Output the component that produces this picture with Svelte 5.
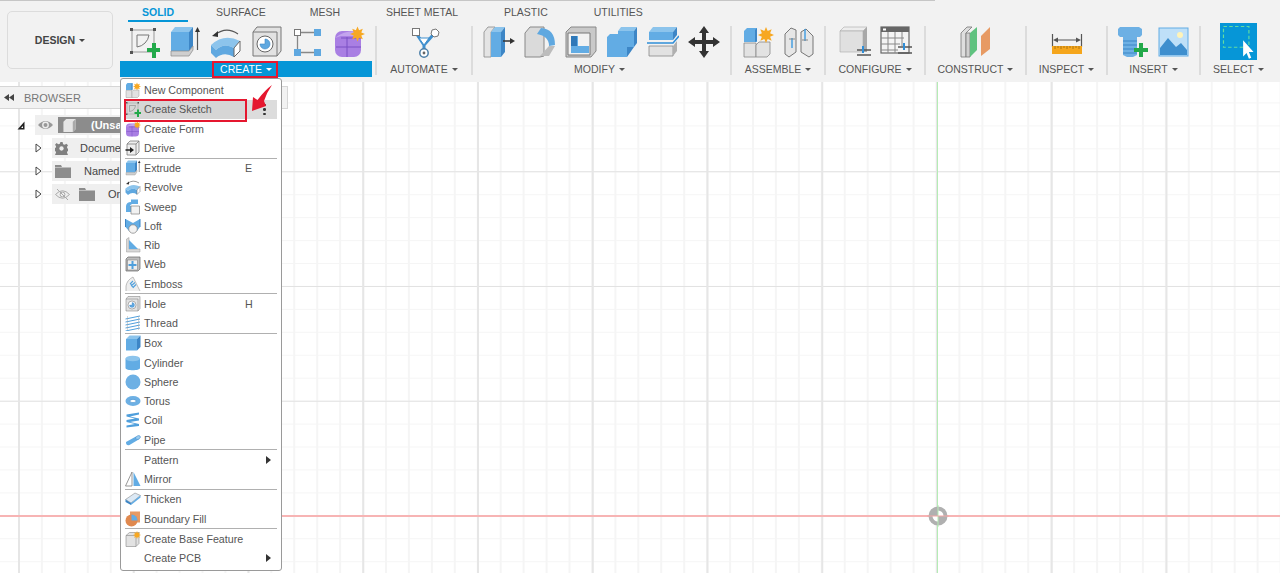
<script>
	// toolbar content
	const tabs = ['SOLID', 'SURFACE', 'MESH', 'SHEET METAL', 'PLASTIC', 'UTILITIES'];

	const groups = [
		{ label: 'CREATE', width: 252, icons: ['sketch', 'extrude', 'revolve', 'hole', 'nodes', 'form'] },
		{ label: 'AUTOMATE', width: 94, icons: ['automate'] },
		{ label: 'MODIFY', width: 257, icons: ['press', 'fillet', 'shell', 'combine', 'split', 'move'] },
		{ label: 'ASSEMBLE', width: 92, icons: ['newcomp', 'joint'] },
		{ label: 'CONFIGURE', width: 98, icons: ['param', 'table'] },
		{ label: 'CONSTRUCT', width: 99, icons: ['plane'] },
		{ label: 'INSPECT', width: 79, icons: ['measure'] },
		{ label: 'INSERT', width: 91, icons: ['bolt', 'image'] },
		{ label: 'SELECT', width: 75, icons: ['select'] }
	];

	const menu = [
		{ name: 'New Component', icon: 'newcomp' },
		{ name: 'Create Sketch', icon: 'sketch', active: true },
		{ name: 'Create Form', icon: 'form' },
		{ name: 'Derive', icon: 'derive' },
		{ sep: true },
		{ name: 'Extrude', icon: 'extrude', key: 'E' },
		{ name: 'Revolve', icon: 'revolve' },
		{ name: 'Sweep', icon: 'sweep' },
		{ name: 'Loft', icon: 'loft' },
		{ name: 'Rib', icon: 'rib' },
		{ name: 'Web', icon: 'web' },
		{ name: 'Emboss', icon: 'emboss' },
		{ sep: true },
		{ name: 'Hole', icon: 'hole', key: 'H' },
		{ name: 'Thread', icon: 'thread' },
		{ sep: true },
		{ name: 'Box', icon: 'box' },
		{ name: 'Cylinder', icon: 'cylinder' },
		{ name: 'Sphere', icon: 'sphere' },
		{ name: 'Torus', icon: 'torus' },
		{ name: 'Coil', icon: 'coil' },
		{ name: 'Pipe', icon: 'pipe' },
		{ sep: true },
		{ name: 'Pattern', sub: true },
		{ name: 'Mirror', icon: 'mirror' },
		{ sep: true },
		{ name: 'Thicken', icon: 'thicken' },
		{ name: 'Boundary Fill', icon: 'boundary' },
		{ sep: true },
		{ name: 'Create Base Feature', icon: 'base' },
		{ name: 'Create PCB', sub: true }
	];

	function star(cx, cy, r) {
		let pts = [];
		for (let i = 0; i < 16; i++) {
			const rad = i % 2 ? r * 0.55 : r;
			const a = (i * Math.PI) / 8;
			pts.push((cx + rad * Math.sin(a)).toFixed(1) + ',' + (cy - rad * Math.cos(a)).toFixed(1));
		}
		return pts.join(' ');
	}
</script>

{#snippet icon(name, size = 32)}
	<svg class="ico" width={size} height={size} viewBox="0 0 32 32">
		{#if name === 'sketch'}
			<path d="M4 4H26V26H4Z" fill="none" stroke="#999" />
			<path d="M9 9H21V9A14 14 0 0 1 9 21Z" fill="none" stroke="#777" />
			<path d="M2 2h3v3H2zM25 2h3v3h-3zM2 25h3v3H2z" fill="#555" />
			<path d="M24 17h4v5h4v4h-4v6h-4v-6h-5v-4h5z" fill="#22a94a" />
		{:else if name === 'extrude'}
			<path d="M2 6L6 1H24L20 6Z" fill="#8cc4ec" />
			<path d="M2 6H20V25H2Z" fill="#62ace4" />
			<path d="M20 6L24 1V20L20 25Z" fill="#3d86c6" />
			<path d="M2 25H20L24 20V24L20 30H2Z" fill="#cfcfcf" stroke="#8a8a8a" stroke-width=".7" />
			<path d="M28.5 24V4" stroke="#555" stroke-width="1.2" />
			<path d="M26 6L28.5 1L31 6Z" fill="#333" />
		{:else if name === 'revolve'}
			<path d="M5 9Q16 0 28 8" fill="none" stroke="#555" stroke-width="1.2" />
			<path d="M2 10L8 5V11Z" fill="#333" />
			<path d="M1 19Q14 7 30 15L24 22Q14 16 6 24Z" fill="#8cc4ec" />
			<path d="M1 19L6 24Q14 16 24 22V31Q14 25 6 32L1 27Z" fill="#5fa8e0" />
			<path d="M24 22L30 15V25L24 31Z" fill="#fff" stroke="#666" />
		{:else if name === 'hole'}
			<path d="M2 6L6 1H30V25L26 30H2Z" fill="#e2e2e2" stroke="#777" />
			<path d="M2 6H26V30" fill="none" stroke="#777" />
			<circle cx="14" cy="18" r="8" fill="#fff" stroke="#666" />
			<path d="M14 13A5 5 0 1 1 9 18H14Z" fill="#5fa8e0" stroke="#3d86c6" stroke-width=".6" />
		{:else if name === 'nodes'}
			<path d="M9 6.5H23M5.5 10V23M9 26.5H23" stroke="#888" stroke-width="1.3" />
			<rect x="2.5" y="3.5" width="6" height="6" fill="#fff" stroke="#777" />
			<rect x="22" y="3" width="7" height="7" fill="#5fa8e0" />
			<rect x="2" y="23" width="7" height="7" fill="#5fa8e0" />
			<rect x="22" y="23" width="7" height="7" fill="#5fa8e0" />
		{:else if name === 'form'}
			<rect x="2" y="5" width="26" height="26" rx="7" fill="#a97fe3" />
			<path d="M2 12Q10 5 22 5L28 10H8Z" fill="#c3a4ee" />
			<path d="M3 21H28M14 11V31M8 12H28" stroke="#7b50c4" stroke-width="1" fill="none" />
			<polygon points={star(24.5, 8, 7.5)} fill="#f7a823" />
		{:else if name === 'automate'}
			<path d="M8 7L16 19L25 9M16 19V26" fill="none" stroke="#3f8fce" stroke-width="3" />
			<path d="M11 12L21 12L16 19Z" fill="#fff" stroke="#3f8fce" />
			<rect x="4.5" y="2.5" width="7" height="7" fill="#fff" stroke="#777" />
			<polygon points="24,4 28,3 31,6 30,10 26,11 23,8" fill="#fff" stroke="#777" />
			<circle cx="16" cy="27" r="4.2" fill="#fff" stroke="#4c7fa8" stroke-width="1.5" />
			<circle cx="16" cy="27" r="1.4" fill="#666" />
		{:else if name === 'press'}
			<path d="M1 6L5 1H12L8 6V31H1Z" fill="#e4e4e4" stroke="#888" stroke-width=".8" />
			<path d="M8 6L12 1H22L18 6Z" fill="#8cc4ec" />
			<path d="M8 6H18V31H8Z" fill="#62ace4" />
			<path d="M18 6L22 1V26L18 31Z" fill="#3d86c6" />
			<path d="M20 15H28" stroke="#333" stroke-width="1.5" />
			<path d="M27 12L32 15L27 18Z" fill="#333" />
		{:else if name === 'fillet'}
			<path d="M1 7L6 1H20V30L16 31H1Z" fill="#dadada" stroke="#888" />
			<path d="M17 2Q31 3 31 19L25 20Q25 10 13 8Z" fill="#5fa8e0" />
			<path d="M25 20H31L25 30H16Z" fill="#bcbcbc" />
		{:else if name === 'shell'}
			<path d="M1 6L6 1H31V25L26 31H1Z" fill="#c9c9c9" stroke="#888" />
			<path d="M3 7H25V29H3Z" fill="#f2f2f2" stroke="#777" />
			<path d="M6 10H13V20H24V27H6Z" fill="#62ace4" />
			<path d="M6 10H12V20H6Z" fill="#2f78b8" />
		{:else if name === 'combine'}
			<path d="M12 5L15 1H31L28 5Z" fill="#8cc4ec" />
			<path d="M12 5H28V21H21V31H1V11L4 8H12Z" fill="#62ace4" />
			<path d="M28 5L31 1V17L28 21ZM21 21H28L21 31Z" fill="#3d86c6" />
		{:else if name === 'split'}
			<path d="M2 6L6 1H30L26 6Z" fill="#8cc4ec" />
			<path d="M2 6H26V14H2Z" fill="#62ace4" />
			<path d="M26 6L30 1V9L26 14Z" fill="#3d86c6" />
			<path d="M0 17H26L32 10" fill="none" stroke="#2f8ed8" stroke-width="1.6" />
			<path d="M2 20H26V30H2Z" fill="#e2e2e2" stroke="#888" stroke-width=".8" />
			<path d="M26 20L30 15V25L26 30Z" fill="#b0b0b0" />
		{:else if name === 'move'}
			<path d="M16 0L21 7H18V14H25V11L32 16L25 21V18H18V25H21L16 32L11 25H14V18H7V21L0 16L7 11V14H14V7H11Z" fill="#333" />
		{:else if name === 'newcomp'}
			<path d="M2 5L5 2H15V16H2Z" fill="#62ace4" />
			<path d="M13 4L15 2V15L13 16Z" fill="#3d86c6" />
			<path d="M2 17H14V31H2Z" fill="#e2e2e2" stroke="#888" stroke-width=".8" />
			<path d="M14 19L17 16H28V28L25 31H14Z" fill="#e2e2e2" stroke="#888" stroke-width=".8" />
			<polygon points={star(24, 9, 8)} fill="#f7a823" />
		{:else if name === 'joint'}
			<path d="M2 8L8 2L13 4V26L6 31L2 28Z" fill="#e6e6e6" stroke="#777" />
			<path d="M18 6L23 3L30 10V28L26 31L18 26Z" fill="#e6e6e6" stroke="#777" />
			<path d="M9 12V22M22 3V15" stroke="#3d9be0" stroke-width="1.4" />
			<path d="M6 13H12M19 14H25" stroke="#888" />
		{:else if name === 'param'}
			<path d="M1 5L5 1H28L24 5Z" fill="#ededed" stroke="#aaa" stroke-width=".6" />
			<path d="M1 5H24V26H1Z" fill="#e0e0e0" stroke="#aaa" stroke-width=".6" />
			<path d="M24 5L28 1V26H24Z" fill="#a8a8a8" />
			<path d="M18 24H32M18 29H32" stroke="#555" stroke-width="1.4" />
			<path d="M24 20V27" stroke="#2f8ed8" stroke-width="2" />
		{:else if name === 'table'}
			<rect x="1" y="1" width="28" height="26" fill="#f4f4f4" stroke="#666" stroke-width="1.2" />
			<path d="M1 1H29V6H1Z" fill="#666" />
			<rect x="3" y="2.5" width="3" height="2" fill="#fff" />
			<path d="M1 12H24M1 18H20M1 24H18M8 6V27M15 6V27M22 6V20" stroke="#888" fill="none" />
			<path d="M18 21H32M18 27H32" stroke="#555" stroke-width="1.4" />
			<path d="M24 17V24" stroke="#2f8ed8" stroke-width="2" />
		{:else if name === 'plane'}
			<path d="M1 7L7 1H12L6 7V31H1Z" fill="#dedede" stroke="#777" stroke-width=".8" />
			<path d="M6 7H10V31H6Z" fill="#d0d0d0" stroke="#777" stroke-width=".8" />
			<path d="M10 7L17 1V24L10 31Z" fill="#5fc27f" />
			<path d="M21 10L30 1V23L21 30Z" fill="#e79a63" />
		{:else if name === 'measure'}
			<path d="M1.5 8V21M30.5 8V21" stroke="#555" stroke-width="1.2" />
			<path d="M4 14H28" stroke="#555" />
			<path d="M2 14L7 11.5V16.5ZM30 14L25 11.5V16.5Z" fill="#555" />
			<rect x="1" y="20" width="30" height="8" fill="#f5a61c" />
			<path d="M4 20v3M7 20v2M10 20v3M13 20v2M16 20v3M19 20v2M22 20v3M25 20v2M28 20v3" stroke="#9a6a10" stroke-width=".8" />
		{:else if name === 'bolt'}
			<path d="M1 3L3 1H22L25 3V9L23 11H3L1 9Z" fill="#6db0e4" />
			<path d="M6 11H20V29L16 31H10L6 29Z" fill="#6db0e4" />
			<path d="M6 15H20M6 19H20M6 23H20M6 27H20" stroke="#3d86c6" />
			<path d="M22 17h4v5h5v4h-5v5h-4v-5h-5v-4h5z" fill="#22a94a" />
		{:else if name === 'image'}
			<rect x="1" y="2" width="29" height="28" fill="#bfe0f8" stroke="#62ace4" />
			<circle cx="22" cy="9" r="3" fill="#fff3b8" />
			<path d="M2 29V22L10 12L18 21L23 17L29 24V29Z" fill="#3f8fce" />
		{:else if name === 'select'}
			<rect x="0" y="0" width="32" height="32" fill="#0696d7" />
			<rect x="3" y="3" width="22" height="18" fill="none" stroke="#63dca0" stroke-dasharray="3 2" />
			<path d="M20 15V29L23 26L25 31L27 30L25 25H29Z" fill="#fff" />
		{:else if name === 'derive'}
			<path d="M4 8L10 2H28V24L22 30H4Z" fill="#eee" stroke="#777" stroke-width="1.5" />
			<path d="M4 8H22V30M22 8L28 2" fill="none" stroke="#777" stroke-width="1.5" />
			<path d="M1 20H12" stroke="#222" stroke-width="3" />
			<path d="M10 14L18 20L10 26Z" fill="#222" />
		{:else if name === 'sweep'}
			<path d="M2 14Q3 6 12 6V1H26V10H14Q10 11 10 16H2Z" fill="#62ace4" />
			<path d="M2 14H14V26H2Z" fill="#62ace4" />
			<path d="M12 14H29V30H12Z" fill="#f2f2f2" stroke="#888" stroke-width="1.5" />
		{:else if name === 'loft'}
			<path d="M1 2L16 10L30 2V18L24 26H8L1 18Z" fill="#62ace4" />
			<path d="M1 2V18M30 2V18" stroke="#3d86c6" stroke-width="2" />
			<circle cx="16" cy="22" r="8.5" fill="#f2f2f2" stroke="#888" stroke-width="1.5" />
		{:else if name === 'rib'}
			<path d="M3 4L8 1V24H30V30H3Z" fill="#d8d8d8" stroke="#999" />
			<path d="M8 6L26 24H8Z" fill="#62ace4" />
		{:else if name === 'web'}
			<path d="M2 6L6 2H30V26L26 30H2Z" fill="#bdbdbd" stroke="#666" stroke-width="1.4" />
			<rect x="5" y="8" width="20" height="20" fill="#eee" stroke="#777" />
			<path d="M13 10h4v6h6v4h-6v6h-4v-6H7v-4h6z" fill="#4f9fdc" />
		{:else if name === 'emboss'}
			<path d="M2 30V20Q4 8 16 2L30 30" fill="#eee" stroke="#aaa" stroke-width="1.5" />
			<path d="M10 16L16 10M12 20L20 13M16 23L22 17M11 15L17 24" stroke="#4f9fdc" stroke-width="2.2" fill="none" />
		{:else if name === 'thread'}
			<path d="M1 8L30 2M1 14L30 8M1 20L30 14M1 26L30 20M1 32L30 26" stroke="#4f9fdc" stroke-width="2" />
			<path d="M5 2V30M27 2V30" stroke="#aaa" />
		{:else if name === 'box'}
			<path d="M2 8L9 1H31L24 8Z" fill="#8cc4ec" />
			<path d="M2 8H24V31H2Z" fill="#62ace4" />
			<path d="M24 8L31 1V24L24 31Z" fill="#3d86c6" />
		{:else if name === 'cylinder'}
			<path d="M1 7V26C1 32 30 32 30 26V7Z" fill="#62ace4" />
			<ellipse cx="15.5" cy="7" rx="14.5" ry="5.5" fill="#8cc4ec" />
		{:else if name === 'sphere'}
			<circle cx="16" cy="16" r="15" fill="#6db0e4" />
		{:else if name === 'torus'}
			<ellipse cx="16" cy="16" rx="15" ry="10" fill="#6db0e4" />
			<ellipse cx="16" cy="16" rx="6" ry="3.2" fill="#fff" stroke="#3d86c6" />
		{:else if name === 'coil'}
			<path d="M3 5L28 1V5L10 9L28 13V17L10 20L28 24V28L3 31V27L20 24L3 20V16L20 13L3 9Z" fill="#4f9fdc" />
		{:else if name === 'pipe'}
			<path d="M2 20L22 9L29 14L9 26Q2 28 2 20Z" fill="#62ace4" />
			<ellipse cx="26" cy="11" rx="5" ry="3.4" transform="rotate(-28 26 11)" fill="#9ccdf0" stroke="#3d86c6" />
		{:else if name === 'mirror'}
			<path d="M14 2V30H1Z" fill="#fff" stroke="#777" stroke-width="1.5" />
			<path d="M17 2L31 30H17Z" fill="#62ace4" />
		{:else if name === 'thicken'}
			<path d="M1 17L20 4L31 9L12 24Z" fill="#dce9f5" stroke="#777" />
			<path d="M1 17L12 24V28L1 22Z" fill="#3d86c6" />
			<path d="M12 24L31 9V13L12 28Z" fill="#62ace4" />
		{:else if name === 'boundary'}
			<rect x="10" y="1" width="20" height="22" fill="#e79a63" />
			<circle cx="13" cy="19" r="12" fill="#e0894f" />
			<path d="M13 7A12 12 0 0 1 25 19H13Z" fill="#62ace4" />
		{:else if name === 'base'}
			<path d="M2 9L9 3H28V25L22 31H2Z" fill="#e2e2e2" stroke="#888" stroke-width="1.2" />
			<path d="M2 9H22V31M22 9L28 3" fill="none" stroke="#888" stroke-width="1.2" />
			<polygon points={star(24, 8, 8)} fill="#f7a823" />
		{/if}
	</svg>
{/snippet}

<div class="app">
	<header class="toolbar">
		<div class="design"><span class="caret">DESIGN</span></div>
		<div class="ribbon">
			<nav class="tabs">
				{#each tabs as t, i}
					<span class="tab" class:on={i === 0}>{t}</span>
				{/each}
			</nav>
			<div class="groups">
				{#each groups as g, i}
					{#if i > 0}<i class="sep"></i>{/if}
					<section class="group" style="width:{g.width}px">
						<div class="icons">
							{#each g.icons as name}
								{@render icon(name, name === 'select' ? 37 : 32)}
							{/each}
						</div>
						<div class="label" class:blue={i === 0}><span class="caret">{g.label}</span></div>
					</section>
				{/each}
			</div>
		</div>
	</header>

	<main class="canvas">
		<div class="axis-x"></div>
		<div class="axis-y"></div>
		<svg class="origin" width="22" height="22" viewBox="0 0 22 22">
			<circle cx="11" cy="11" r="9.5" fill="#b0b0b0" />
			<path d="M11 11V5.5A5.5 5.5 0 0 1 16.5 11ZM11 11V16.5A5.5 5.5 0 0 1 5.5 11Z" fill="#fff" />
			<path d="M11 0V22" stroke="#b5ecb5" />
			<path d="M0 11H22" stroke="#f4a6a6" />
		</svg>

		<div class="browser">
			<svg width="10" height="7" viewBox="0 0 10 7"><path d="M5 0V7L0 3.5ZM10 0V7L5 3.5Z" fill="#444" /></svg>
			<span>BROWSER</span>
		</div>

		<div class="tree">
			<div class="node root">
				<svg class="tri" width="8" height="9" viewBox="0 0 8 9"><path d="M7.5 .5V8.5H.5Z" fill="#222" /><path d="M6 5V7H4Z" fill="#fff" /></svg>
				<div class="pill">
					<svg width="15" height="10" viewBox="0 0 15 10"><path d="M0 5Q7.5 -3 15 5Q7.5 13 0 5Z" fill="#999" /><circle cx="7.5" cy="5" r="3.4" fill="#eee" /><circle cx="7.5" cy="5" r="2" fill="#999" /></svg>
					<div class="rootbar">
						<svg width="15" height="15" viewBox="0 0 32 32"><path d="M3 8L9 2H29V24L23 30H3Z" fill="#e6e6e6" /><path d="M23 8L29 2V24L23 30Z" fill="#aaa" /></svg>
						<b>(Unsaved)</b>
					</div>
				</div>
			</div>
			<div class="node">
				<svg class="open" width="7" height="10" viewBox="0 0 7 10"><path d="M1 1L6 5L1 9Z" fill="#fff" stroke="#444" /></svg>
				<div class="pill">
					<svg width="13" height="13" viewBox="0 0 24 24"><path d="M10 0h4l1 4 3 1 3-2 3 3-2 3 1 3 4 1v-1 4l-4 1-1 3 2 3-3 3-3-2-3 1-1 4h-4l-1-4-3-1-3 2-3-3 2-3-1-3-4-1v-4l4-1 1-3-2-3 3-3 3 2 3-1z" fill="#808080" /><circle cx="12" cy="12" r="4" fill="#eee" /></svg>
					<span class="doc">Document Settings</span>
				</div>
			</div>
			<div class="node">
				<svg class="open" width="7" height="10" viewBox="0 0 7 10"><path d="M1 1L6 5L1 9Z" fill="#fff" stroke="#444" /></svg>
				<div class="pill">
					<svg width="16" height="13" viewBox="0 0 16 13"><path d="M0 0H6L7 2H16V13H0Z" fill="#8c8c8c" /><path d="M0 2.5H16" stroke="#ddd" stroke-width=".6" /></svg>
					<span class="named">Named Views</span>
				</div>
			</div>
			<div class="node">
				<svg class="open" width="7" height="10" viewBox="0 0 7 10"><path d="M1 1L6 5L1 9Z" fill="#fff" stroke="#444" /></svg>
				<div class="pill">
					<svg width="15" height="11" viewBox="0 0 15 11"><path d="M.5 5.5Q7.5 -2 14.5 5.5Q7.5 13 .5 5.5Z" fill="none" stroke="#aaa" /><circle cx="7.5" cy="5.5" r="2.4" fill="none" stroke="#aaa" /><path d="M2 0L13 11" stroke="#aaa" /></svg>
					<svg class="fold" width="16" height="13" viewBox="0 0 16 13"><path d="M0 0H6L7 2H16V13H0Z" fill="#8c8c8c" /><path d="M0 2.5H16" stroke="#ddd" stroke-width=".6" /></svg>
					<span class="orig">Origin</span>
				</div>
			</div>
		</div>
	</main>

	<!-- dropdown of CREATE -->
	<div class="menu">
		{#each menu as m}
			{#if m.sep}
				<hr />
			{:else}
				<div class="item" class:active={m.active}>
					<span class="mi">
						{#if m.icon}{@render icon(m.icon, 16)}{/if}
					</span>
					<span>{m.name}</span>
					{#if m.key}<span class="key">{m.key}</span>{/if}
					{#if m.sub}<span class="sub"></span>{/if}
					{#if m.active}<span class="more"><i></i><i></i><i></i></span>{/if}
				</div>
			{/if}
		{/each}
	</div>

	<!-- red annotations -->
	<div class="mark mark-create"></div>
	<div class="mark mark-sketch"></div>
	<svg class="arrow" width="24" height="30" viewBox="0 0 24 30">
		<path d="M22 1Q17 8 14 17L16 22L2 27L3 13L7.5 16Q15 6 22 1Z" fill="#e5172f" />
	</svg>
</div>

<style>
	:global(body) {
		background: #fff;
	}
	.app {
		position: relative;
		width: 1280px;
		height: 573px;
		overflow: hidden;
		display: flex;
		flex-direction: column;
		font-family: 'Liberation Sans', Arial, sans-serif;
		color: #555;
	}
	.ico {
		display: block;
		flex: none;
	}

	/* toolbar */
	.toolbar {
		position: relative;
		flex: none;
		height: 82px;
		display: flex;
		background: #f2f2f2;
		padding-left: 7px;
		box-sizing: border-box;
	}
	.toolbar::before {
		content: '';
		position: absolute;
		left: 0;
		top: 0;
		width: 935px;
		height: 1px;
		background: #c6c6c6;
	}
	.design {
		width: 106px;
		height: 58px;
		margin-top: 11px;
		margin-right: 7px;
		box-sizing: border-box;
		border: 1px solid #dcdcdc;
		border-radius: 5px;
		display: flex;
		align-items: center;
		justify-content: center;
		font-size: 10.5px;
		font-weight: bold;
		color: #444;
	}
	.tabs {
		display: flex;
		height: 22px;
	}
	.tab {
		margin: 0 9px;
		padding: 0 13px;
		height: 22px;
		box-sizing: border-box;
		line-height: 24px;
		font-size: 10.5px;
		white-space: nowrap;
		color: #555;
	}
	.tab:nth-child(n + 4) {
		margin-left: 11px;
	}
	.tab.on {
		color: #0696d7;
		font-weight: bold;
		border-bottom: 2px solid #0696d7;
		padding: 0 14px;
		margin: 0 6px 0 8px;
	}
	.groups {
		display: flex;
		height: 55px;
	}
	.sep {
		width: 2px;
		height: 49px;
		margin-top: 4px;
		background: #dcdcdc;
		flex: none;
	}
	.sep:nth-child(2) {
		margin-left: 3px;
	}
	.group {
		flex: none;
		display: flex;
		flex-direction: column;
	}
	.group:nth-of-type(3) .label {
		padding-right: 4px;
	}
	.icons {
		height: 39px;
		display: flex;
		align-items: center;
		justify-content: center;
		gap: 9px;
	}
	.label {
		height: 16px;
		line-height: 16px;
		text-align: center;
		font-size: 10.5px;
		color: #555;
	}
	.label.blue {
		background: #0696d7;
		color: #fff;
	}
	.caret::after {
		content: '';
		display: inline-block;
		margin-left: 4px;
		vertical-align: 2px;
		border-left: 3px solid transparent;
		border-right: 3px solid transparent;
		border-top: 3.5px solid currentColor;
	}

	/* canvas grid */
	.canvas {
		position: relative;
		flex: 1;
		background-color: #fff;
		background-image:
			linear-gradient(to right, #e6e6e6 2px, transparent 2px),
			linear-gradient(to bottom, #e2e2e2 1px, transparent 1px),
			linear-gradient(to right, #f5f5f5 2px, transparent 2px),
			linear-gradient(to bottom, #f5f5f5 1px, transparent 1px);
		background-size:
			114.75px 100%,
			100% 114.75px,
			22.95px 100%,
			100% 22.95px;
		background-position:
			18px 0,
			0 -25.5px,
			18px 0,
			0 -2.5px;
	}
	.axis-x {
		position: absolute;
		left: 0;
		right: 0;
		top: 433px;
		height: 2px;
		background: #f7b4b4;
	}
	.axis-y {
		position: absolute;
		top: 0;
		bottom: 0;
		left: 937px;
		width: 1px;
		background: #b5ecb5;
	}
	.origin {
		position: absolute;
		left: 927px;
		top: 423px;
	}

	/* browser panel */
	.browser {
		position: absolute;
		left: 0;
		top: 4px;
		width: 288px;
		height: 23px;
		box-sizing: border-box;
		background: #f2f2f2;
		border: 1px solid #d6d6d6;
		border-left: none;
		display: flex;
		align-items: center;
		gap: 10px;
		padding-left: 4px;
		font-size: 11px;
		color: #777;
	}
	.tree {
		position: absolute;
		left: 0;
		top: 33px;
		width: 200px;
		display: flex;
		flex-direction: column;
		gap: 3px;
		font-size: 11px;
		color: #444;
	}
	.node {
		height: 20px;
		display: flex;
		align-items: center;
		padding-left: 35px;
	}
	.node .open {
		margin-right: 10px;
		flex: none;
	}
	.pill {
		flex: 1;
		height: 20px;
		background: #efefef;
		display: flex;
		align-items: center;
		padding-left: 3px;
		white-space: nowrap;
	}
	.pill svg,
	.rootbar svg {
		flex: none;
	}
	.root {
		padding-left: 17px;
	}
	.root .tri {
		margin-right: 10px;
		flex: none;
	}
	.rootbar {
		margin-left: 5px;
		flex: 1;
		height: 16px;
		background: #8c8c8c;
		display: flex;
		align-items: center;
		padding-left: 4px;
		color: #fff;
	}
	.rootbar b {
		margin-left: 14px;
	}
	.doc {
		margin-left: 12px;
	}
	.named {
		margin-left: 13px;
	}
	.fold {
		margin-left: 9px;
	}
	.orig {
		margin-left: 13px;
	}

	/* dropdown */
	.menu {
		position: absolute;
		left: 120px;
		top: 78px;
		width: 162px;
		height: 493px;
		box-sizing: border-box;
		padding: 1.5px 0;
		background: #fff;
		border: 1px solid #9a9a9a;
		border-radius: 3px;
		font-size: 10.7px;
		color: #555;
	}
	.menu hr {
		margin: 0 4px;
		border: none;
		height: 1px;
		background: #b0b0b0;
	}
	.item {
		height: 19.25px;
		margin: 0 4px;
		display: grid;
		grid-template-columns: 19px 101px 1fr;
		align-items: center;
		white-space: nowrap;
	}
	.item.active {
		background: #d6d6d6;
	}
	.mi {
		height: 16px;
	}
	.key {
		grid-column: 3;
	}
	.sub {
		grid-column: 3;
		margin-left: 21px;
		width: 0;
		height: 0;
		border-top: 4.5px solid transparent;
		border-bottom: 4.5px solid transparent;
		border-left: 5px solid #333;
	}
	.more {
		grid-column: 3;
		align-self: stretch;
		margin-left: 1px;
		padding-left: 6px;
		background: #dcdcdc;
		display: flex;
		flex-direction: column;
		align-items: center;
		justify-content: center;
		gap: 2px;
	}
	.more i {
		width: 2.5px;
		height: 2.5px;
		border-radius: 50%;
		background: #333;
	}

	/* annotations */
	.mark {
		position: absolute;
		box-sizing: border-box;
		border: 2px solid #e5172f;
	}
	.mark-create {
		left: 212px;
		top: 61px;
		width: 66px;
		height: 17px;
	}
	.mark-sketch {
		left: 124px;
		top: 99px;
		width: 123px;
		height: 23px;
	}
	.arrow {
		position: absolute;
		left: 250px;
		top: 84px;
	}
</style>
